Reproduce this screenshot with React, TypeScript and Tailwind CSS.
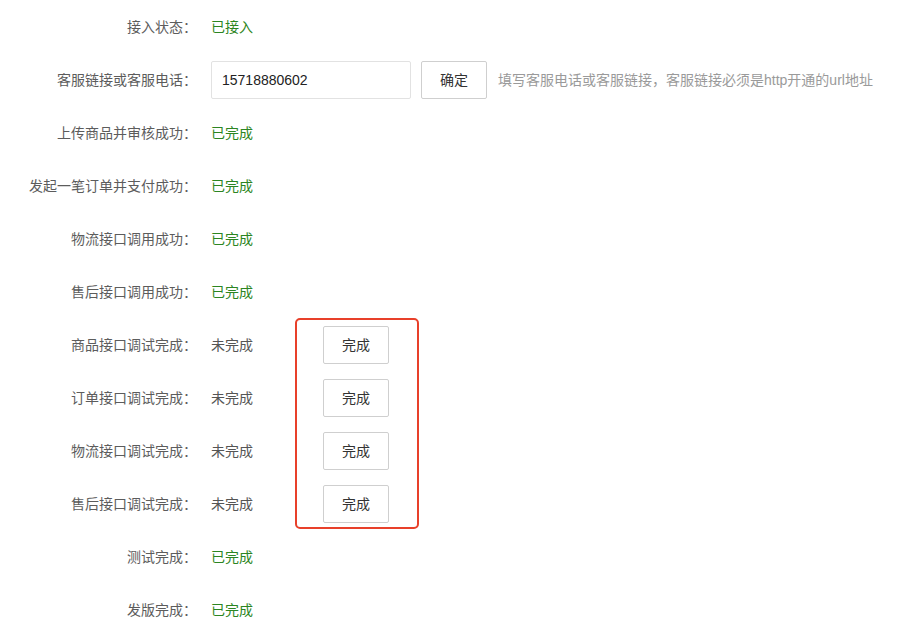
import React from "react";

const font = "font-['Liberation_Sans','Noto_Sans_CJK_SC',sans-serif]";

const topRows = [
  { label: "上传商品并审核成功：", value: "已完成" },
  { label: "发起一笔订单并支付成功：", value: "已完成" },
  { label: "物流接口调用成功：", value: "已完成" },
  { label: "售后接口调用成功：", value: "已完成" },
];

const debugRows = [
  "商品接口调试完成：",
  "订单接口调试完成：",
  "物流接口调试完成：",
  "售后接口调试完成：",
];

const bottomRows = [
  { label: "测试完成：", value: "已完成" },
  { label: "发版完成：", value: "已完成" },
];

function Label({ children }: { children: React.ReactNode }) {
  return <span className="w-[197px] shrink-0 text-right text-[14px] text-[#5c5c5c]">{children}</span>;
}

function Done({ children }: { children: React.ReactNode }) {
  return <span className="ml-[14px] text-[14px] text-[#2c8522]">{children}</span>;
}

function Btn({ children }: { children: React.ReactNode }) {
  return (
    <button className="h-[38px] w-[66px] rounded-[2px] border border-[#cfcfcf] bg-white text-[14px] text-[#333]">
      {children}
    </button>
  );
}

export default function App() {
  return (
    <div className={`min-h-[637px] w-[906px] bg-white pt-[0.5px] ${font}`}>
      <div className="flex h-[53px] items-center">
        <Label>接入状态：</Label>
        <Done>已接入</Done>
      </div>

      <div className="flex h-[53px] items-center">
        <Label>客服链接或客服电话：</Label>
        <input
          defaultValue="15718880602"
          className="ml-[14px] h-[38px] w-[200px] rounded-[2px] border border-[#e2e2e2] px-[10px] text-[14px] text-[#222] outline-none"
        />
        <span className="ml-[10px]">
          <Btn>确定</Btn>
        </span>
        <span className="ml-[11px] text-[14px] text-[#9a9a9a]">
          填写客服电话或客服链接，客服链接必须是http开通的url地址
        </span>
      </div>

      {topRows.map((r) => (
        <div key={r.label} className="flex h-[53px] items-center">
          <Label>{r.label}</Label>
          <Done>{r.value}</Done>
        </div>
      ))}

      <div className="relative">
        {debugRows.map((label) => (
          <div key={label} className="flex h-[53px] items-center">
            <Label>{label}</Label>
            <span className="ml-[14px] w-[84px] text-[14px] text-[#555]">未完成</span>
            <span className="flex w-[124px] pl-[28px]">
              <Btn>完成</Btn>
            </span>
          </div>
        ))}
        <div className="pointer-events-none absolute top-[-0.5px] left-[295px] h-[211px] w-[124px] rounded-[5px] border-2 border-[#e8402a]" />
      </div>

      {bottomRows.map((r) => (
        <div key={r.label} className="flex h-[53px] items-center">
          <Label>{r.label}</Label>
          <Done>{r.value}</Done>
        </div>
      ))}
    </div>
  );
}
